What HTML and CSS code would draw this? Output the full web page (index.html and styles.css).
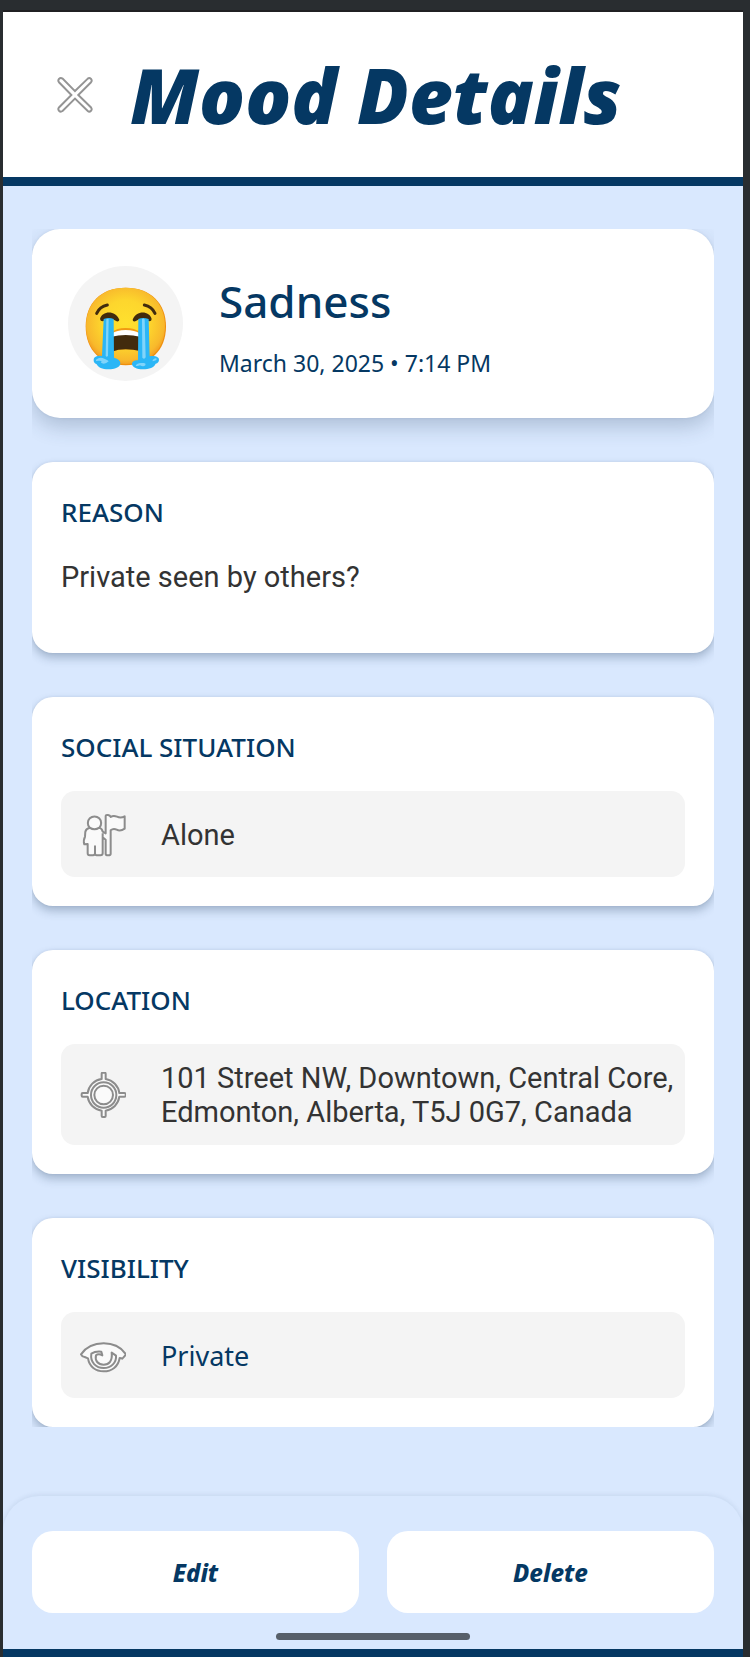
FILE: index.html
```html
<!DOCTYPE html>
<html lang="en">
<head>
<meta charset="utf-8">
<meta name="viewport" content="width=device-width, initial-scale=1">
<title>Mood Details</title>
<link rel="stylesheet" href="styles.css">
</head>
<body>
<div class="screen">
  <header class="header">
    <button class="close" type="button" aria-label="Close">
      <svg class="close-icon" viewBox="170 228 110 110" aria-hidden="true">
        <path d="M225 271L264 233Q269 229 274 234Q278 239 274 244L235 283L274 321Q278 327 274 331Q269 336 264 332L225 294L187 332Q181 336 176 331Q172 326 176 321L214 283L176 244Q172 239 176 234Q181 229 187 233Z"/>
      </svg>
    </button>
    <h1 class="title">Mood Details</h1>
  </header>

  <main class="main">
    <div class="cards">
      <section class="card summary">
        <div class="avatar">
          <svg class="emoji" viewBox="24 47 345 345" role="img" aria-label="Loudly crying face">
            <defs>
              <radialGradient id="face" cx="50%" cy="46%" r="54%">
                <stop offset="0" stop-color="#ffe02e"/>
                <stop offset=".55" stop-color="#fdd62d"/>
                <stop offset=".9" stop-color="#f8b92c"/>
                <stop offset="1" stop-color="#f4a223"/>
              </radialGradient>
            </defs>
            <path d="M197 112C272 112 318 159 318 228C318 302 270 345 197 345C124 345 77 302 77 228C77 159 122 112 197 112Z" fill="#ef8f0c"/>
            <path d="M197 112C270 112 315 159 315 227C315 298 268 341 197 341C125 341 78 299 78 227C78 159 124 112 197 112Z" fill="url(#face)"/>
            <path d="M155 246Q170 233 197 233Q225 233 240 246V300Q220 297 197 297Q174 297 155 304Z" fill="#f19a12"/>
            <path d="M155 252Q170 241 197 241Q225 241 240 252V302Q220 297 197 297Q174 297 155 304Z" fill="#422b0d"/>
            <path d="M155 250Q170 239 197 239Q225 239 240 250V259Q220 254 197 254Q174 254 155 259Z" fill="#fff"/>
            <path d="M110 189Q119 169 142 164" fill="none" stroke="#422b0d" stroke-width="9" stroke-linecap="round"/>
            <path d="M253 164Q276 169 285 189" fill="none" stroke="#422b0d" stroke-width="9" stroke-linecap="round"/>
            <path d="M120 206C126 181 166 178 178 208Q177 215 170 213Q150 197 128 213Q121 213 120 206Z" fill="#422b0d"/>
            <path d="M218 208C229 178 269 181 275 206Q275 213 268 213Q246 197 226 213Q218 215 218 208Z" fill="#422b0d"/>
            <path d="M131 206Q147 200 161 206L162 322Q181 327 181 339C181 352 164 357 145 357C127 357 114 351 110 342Q100 337 101 328C102 318 115 315 126 317Z" fill="#2bb6f6"/>
            <path d="M235 206Q249 200 266 206L269 318C283 315 297 319 297 328Q297 337 287 340C283 351 267 357 249 357C230 357 216 350 216 341C216 333 225 329 234 330Z" fill="#2bb6f6"/>
            <path d="M139 207Q143 204 146 207L144 316Q140 322 137 316ZM246 206Q250 203 254 207L257 321Q253 329 247 322ZM108 328Q120 318 133 325Q143 328 146 333Q139 340 131 340Q119 339 125 332Q117 330 108 332ZM227 346Q232 336 248 338Q259 337 256 345Q250 351 240 345Q231 349 227 346ZM278 329Q286 320 291 326Q288 331 278 333Z" fill="#81d4fa"/>
          </svg>
        </div>
        <div class="summary-text">
          <h2 class="mood">Sadness</h2>
          <p class="date">March 30, 2025 • 7:14 PM</p>
        </div>
      </section>

      <section class="card">
        <h2 class="label">REASON</h2>
        <p class="reason">Private seen by others?</p>
      </section>

      <section class="card">
        <h2 class="label">SOCIAL SITUATION</h2>
        <div class="field">
          <svg class="icon" viewBox="30 60 138 138" aria-hidden="true">
            <path d="M59 107A20 20 0 1 1 88 107Q97 111 98 119L107 124V73Q107 68 114 69Q120 70 122 75Q130 69 141 74Q152 80 164 73V110Q151 119 140 113Q130 108 122 115V185Q122 190 114 190Q107 190 107 185V143L98 136V184Q98 190 91 190H80Q75 190 75 184V163V184Q75 190 69 190H59Q53 190 53 184V156L43 157Q39 145 45 134L46 119Q48 110 59 107Q73 117 88 107M98 124V136"/>
          </svg>
          <p class="value">Alone</p>
        </div>
      </section>

      <section class="card">
        <h2 class="label">LOCATION</h2>
        <div class="field">
          <svg class="icon" viewBox="30 49 138 138" aria-hidden="true">
            <path d="M95 70V54Q95 51 98 51H104Q107 51 107 54V70A49 49 0 0 1 148 112H163Q167 112 167 115V120Q167 123 163 123H148A49 49 0 0 1 107 165V181Q107 184 104 184H98Q95 184 95 181V165A49 49 0 0 1 53 123H38Q35 123 35 120V115Q35 112 38 112H53A49 49 0 0 1 95 70Z"/>
            <circle cx="101" cy="118" r="38"/>
            <circle cx="101" cy="118" r="28"/>
          </svg>
          <p class="value">101 Street NW, Downtown, Central Core, Edmonton, Alberta, T5J 0G7, Canada</p>
        </div>
      </section>

      <section class="card">
        <h2 class="label">VISIBILITY</h2>
        <div class="field">
          <svg class="icon" viewBox="30 36 138 138" aria-hidden="true">
            <path d="M33 100C49 77 74 67 101 67C128 67 152 77 168 100Q162 108 157 113Q154 111 149 111C145 137 125 151 101 151C77 151 58 137 54 112L44 108Q36 107 33 100Z"/>
            <path d="M94 92Q76 90 64 98C60 124 78 141 101 141C124 141 140 124 138 104L125 95C128 120 117 131 101 131C84 131 74 119 78 103Q85 97 97 103Z"/>
          </svg>
          <p class="value value-accent">Private</p>
        </div>
      </section>
    </div>
  </main>

  <footer class="footer">
    <div class="actions">
      <button class="action" type="button">Edit</button>
      <button class="action" type="button">Delete</button>
    </div>
    <div class="home-indicator"></div>
  </footer>
</div>
</body>
</html>
```
FILE: styles.css
```css
:root {
  --navy: #053863;
  --sky: #d9e8fe;
  --frame: #292d30;
  --ui: "Noto Sans", "Open Sans", sans-serif;
}

* {
  box-sizing: border-box;
}

body {
  margin: 0;
  background: var(--frame);
  color: var(--navy);
  font-family: var(--ui);
}

h1, h2, p {
  margin: 0;
}

.screen {
  display: flex;
  flex-direction: column;
  min-height: calc(100vh - 10px);
  margin: 10px 7px 0 3px;
  border-top: 2px solid #202023;
  border-bottom: 8px solid var(--navy);
  background: var(--sky);
}

.header {
  display: flex;
  align-items: center;
  gap: 37px;
  height: 174px;
  padding: 0 54px;
  border-bottom: 9px solid var(--navy);
  background: #fff;
}

.close {
  display: flex;
  padding: 0;
  border: 0;
  background: none;
}

.close-icon {
  width: 36px;
  height: 36px;
  fill: #fff;
  stroke: #949494;
  stroke-width: 6;
}

.title {
  font-size: 76px;
  font-style: italic;
  font-weight: 900;
  line-height: 100px;
  white-space: nowrap;
}

.main {
  flex: 1;
  padding: 43px 29px 69px;
}

.cards {
  display: flex;
  flex-direction: column;
  gap: 44px;
  overflow: hidden;
}

.card {
  padding: 29px;
  border-radius: 21px;
  background: #fff;
  box-shadow: 0 5px 10px rgba(40, 65, 95, 0.3), 0 0 3px rgba(40, 65, 95, 0.1);
}

.summary {
  display: flex;
  align-items: center;
  gap: 36px;
  padding: 37px 36px;
  border-radius: 28px;
  box-shadow: 0 9px 20px rgba(40, 65, 95, 0.24), 0 0 3px rgba(40, 65, 95, 0.1);
}

.avatar {
  flex: none;
  width: 115px;
  height: 115px;
  border-radius: 50%;
  background: #f4f4f4;
}

.emoji {
  display: block;
  width: 100%;
}

.mood {
  font-size: 44px;
  font-weight: 500;
  line-height: 68px;
}

.date {
  font-size: 23px;
  line-height: 36px;
  margin-top: 10px;
}

.label {
  font-size: 26px;
  font-weight: 500;
  line-height: 42px;
  margin-bottom: 23px;
}

.reason,
.value {
  color: #333;
  font-family: Roboto, sans-serif;
  font-size: 29px;
  line-height: 34px;
}

.reason {
  min-height: 68px;
  padding-top: 4px;
}

.field {
  display: flex;
  align-items: center;
  gap: 35px;
  min-height: 86px;
  padding: 17px 8px 16px 19px;
  border-radius: 14px;
  background: #f4f4f4;
}

.icon {
  flex: none;
  width: 46px;
  height: 46px;
  fill: #fafafa;
  stroke: #8c8c8c;
  stroke-width: 6;
  stroke-linejoin: round;
}

.value-accent {
  color: var(--navy);
  font-family: var(--ui);
  font-size: 27px;
}

.footer {
  padding: 35px 29px 9px;
  border-radius: 36px 36px 0 0;
  background: var(--sky);
  box-shadow: 0 -1px 5px rgba(40, 65, 95, 0.1);
  clip-path: inset(-10px 0 0 0);
}

.actions {
  display: grid;
  grid-template-columns: 1fr 1fr;
  gap: 28px;
}

.action {
  height: 82px;
  border: 0;
  border-radius: 21px;
  background: #fff;
  color: var(--navy);
  font-family: var(--ui);
  font-size: 24px;
  font-style: italic;
  font-weight: 800;
}

.home-indicator {
  width: 194px;
  height: 7px;
  margin: 20px auto 0;
  border-radius: 4px;
  background: #575f69;
}
```
